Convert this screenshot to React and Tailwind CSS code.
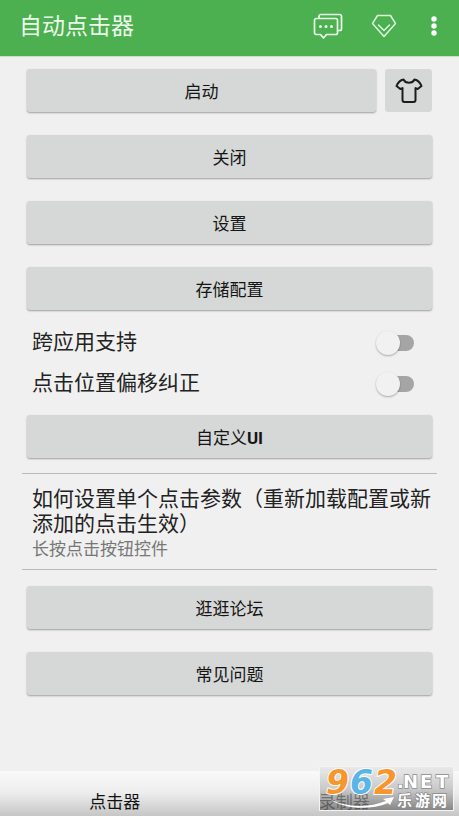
import { useState } from "react";

function ChatIcon() {
  return (
    <svg width="30" height="27" viewBox="0 0 30 27" fill="none" stroke="#e9fbe9" strokeWidth="1.7" strokeLinejoin="round">
      <path d="M6 5V3.2A1.7 1.7 0 0 1 7.7 1.5h19.1a1.7 1.7 0 0 1 1.7 1.7v12.6a1.7 1.7 0 0 1-1.7 1.7H25" />
      <path d="M3.2 5.5h19.6a1.7 1.7 0 0 1 1.7 1.7v12.6a1.7 1.7 0 0 1-1.7 1.7h-9.3L10.5 25l-3-3.5H3.2a1.7 1.7 0 0 1-1.7-1.7V7.2a1.7 1.7 0 0 1 1.7-1.7z" />
      <g fill="#e9fbe9" stroke="none">
        <circle cx="7.5" cy="13.5" r="1.5" />
        <circle cx="13" cy="13.5" r="1.5" />
        <circle cx="18.5" cy="13.5" r="1.5" />
      </g>
    </svg>
  );
}

function DiamondIcon() {
  return (
    <svg width="26" height="24" viewBox="0 0 26 24" fill="none" stroke="#dcf7dc" strokeWidth="1.5" strokeLinejoin="round" strokeLinecap="round">
      <path d="M6.5 1.5h13l5 8L13 22.5 1.5 9.5z" />
      <path d="M7.5 11l5.5 5.5 5.5-5.5" />
    </svg>
  );
}

function MoreIcon() {
  return (
    <svg width="6" height="22" viewBox="0 0 6 22" fill="#fff">
      <circle cx="3" cy="4" r="2.7" />
      <circle cx="3" cy="11" r="2.7" />
      <circle cx="3" cy="18" r="2.7" />
    </svg>
  );
}

function ShirtIcon() {
  return (
    <svg width="28" height="26" viewBox="0 0 28 26" fill="none" stroke="#1c1c1c" strokeWidth="2" strokeLinejoin="round" strokeLinecap="round">
      <path d="M8.5 1.5c1.2 2.4 3 3.3 5.5 3.3s4.3-.9 5.5-3.3c3.5.7 5.6 3 7 6.5l-3.8 3-2.2-.9V22a2 2 0 0 1-2 2h-9a2 2 0 0 1-2-2V10.1L5.3 11l-3.8-3c1.4-3.5 3.5-5.8 7-6.5z" />
    </svg>
  );
}

function GrayButton({ children, className = "" }) {
  return (
    <button
      type="button"
      className={`h-[43px] rounded-[3px] bg-[#d6d8d7] pt-0.5 text-[17px] leading-5 text-[#151515] shadow-[0_1px_2px_rgba(0,0,0,0.35)] ${className}`}
    >
      {children}
    </button>
  );
}

function SwitchRow({ label }) {
  const [on, setOn] = useState(false);

  return (
    <label className="flex h-[41px] items-center justify-between pr-[18px] pl-[5px] text-[21px] text-[#222]">
      {label}
      <span className="relative flex h-6 w-[38px] items-center justify-end">
        <input
          type="checkbox"
          role="switch"
          checked={on}
          onChange={(e) => setOn(e.target.checked)}
          className="peer h-4 w-8 appearance-none rounded-full bg-[#a5a5a5] checked:bg-[#9bd09d]"
        />
        <span className="pointer-events-none absolute top-0 left-0 size-6 rounded-full bg-[#f1f1f1] shadow-[0_1px_2px_rgba(0,0,0,0.3)] peer-checked:left-[14px] peer-checked:bg-[#4caf50]" />
      </span>
    </label>
  );
}

function SiteBadge() {
  return (
    <svg width="135" height="45" viewBox="0 0 135 45" className="pointer-events-none absolute right-[5px] bottom-[5px]">
      <defs>
        <linearGradient id="badge" x1="0" y1="0" x2="0" y2="1">
          <stop offset="0" stopColor="#e6e6e6" stopOpacity="0.7" />
          <stop offset="0.5" stopColor="#b5b5b5" stopOpacity="0.65" />
          <stop offset="1" stopColor="#6c6c6c" stopOpacity="0.75" />
        </linearGradient>
      </defs>
      <rect x="0.5" y="0.5" width="134" height="44" fill="url(#badge)" stroke="#f4f4f4" />
      <g
        fontFamily="DejaVu Sans"
        fontWeight="700"
        fontStyle="italic"
        fontSize="33"
        stroke="#fff"
        strokeWidth="2"
        strokeLinejoin="round"
        paintOrder="stroke"
      >
        <text x="7" y="28" fill="#f7962d">9</text>
        <text x="31" y="28" fill="#5ab4e6">6</text>
        <text x="55" y="28" fill="#f7962d">2</text>
      </g>
      <path d="M9 32c17 10 41 10 58 3l-3-2 11-2-4 8-2-2c-20 8-45 6-60-5z" fill="#fff" />
      <g fill="#fff" stroke="#8c8c8c" strokeWidth="1.5" paintOrder="stroke" fontWeight="700">
        <g fontFamily="DejaVu Sans" fontSize="18">
          <text x="78" y="22">.</text>
          <text x="84" y="22">N</text>
          <text x="101" y="22">E</text>
          <text x="117" y="22">T</text>
        </g>
        <g fontFamily="Noto Sans CJK SC" fontSize="15">
          <text x="78" y="40">乐</text>
          <text x="96" y="40">游</text>
          <text x="113" y="40">网</text>
        </g>
      </g>
    </svg>
  );
}

function App() {
  return (
    <div className="flex min-h-screen flex-col bg-[#f0f0f0] font-[Roboto,'Noto_Sans_CJK_SC',sans-serif]">
      <header className="flex h-[57px] items-center justify-between border-b border-[#c4e3c5] bg-[#4caf50] pr-[22px] pb-1 pl-[19px]">
        <h1 className="pt-0.5 text-[23px] leading-8 text-[#ecfbec]">自动点击器</h1>
        <div className="flex items-center">
          <button type="button" aria-label="消息" className="mr-7">
            <ChatIcon />
          </button>
          <button type="button" aria-label="会员" className="mr-[34px]">
            <DiamondIcon />
          </button>
          <button type="button" aria-label="更多">
            <MoreIcon />
          </button>
        </div>
      </header>

      <main className="flex flex-col px-[27px] pt-3 pb-6">
        <div className="flex flex-col gap-[23px]">
          <div className="flex gap-[9px]">
            <GrayButton className="flex-1">启动</GrayButton>
            <button type="button" aria-label="皮肤" className="flex h-[43px] w-[47px] items-center justify-center rounded-[3px] bg-[#d6d8d7]">
              <ShirtIcon />
            </button>
          </div>
          <GrayButton>关闭</GrayButton>
          <GrayButton>设置</GrayButton>
          <GrayButton>存储配置</GrayButton>
        </div>

        <div className="pt-3 pb-[11px]">
          <SwitchRow label="跨应用支持" />
          <SwitchRow label="点击位置偏移纠正" />
        </div>

        <GrayButton>
          自定义<span className="font-bold">UI</span>
        </GrayButton>

        <section className="-mx-[5px] mt-[15px] mb-4 border-y border-[#b9b9b9] pt-[13px] pb-[10px] pl-[10px]">
          <h2 className="text-[21px] leading-[25px] text-[#222]">如何设置单个点击参数（重新加载配置或新添加的点击生效）</h2>
          <p className="mt-0.5 text-[17px] leading-5 text-[#777]">长按点击按钮控件</p>
        </section>

        <div className="flex flex-col gap-[23px]">
          <GrayButton>逛逛论坛</GrayButton>
          <GrayButton>常见问题</GrayButton>
        </div>
      </main>

      <nav className="relative mt-auto grid h-[45px] grid-cols-2 bg-linear-to-b from-[#fafafa] via-[#ececec] to-[#c6c6c6] pt-4 text-[17px] leading-7 text-[#111]">
        <button type="button">点击器</button>
        <button type="button">录制器</button>
        <SiteBadge />
      </nav>
    </div>
  );
}

export default App;
